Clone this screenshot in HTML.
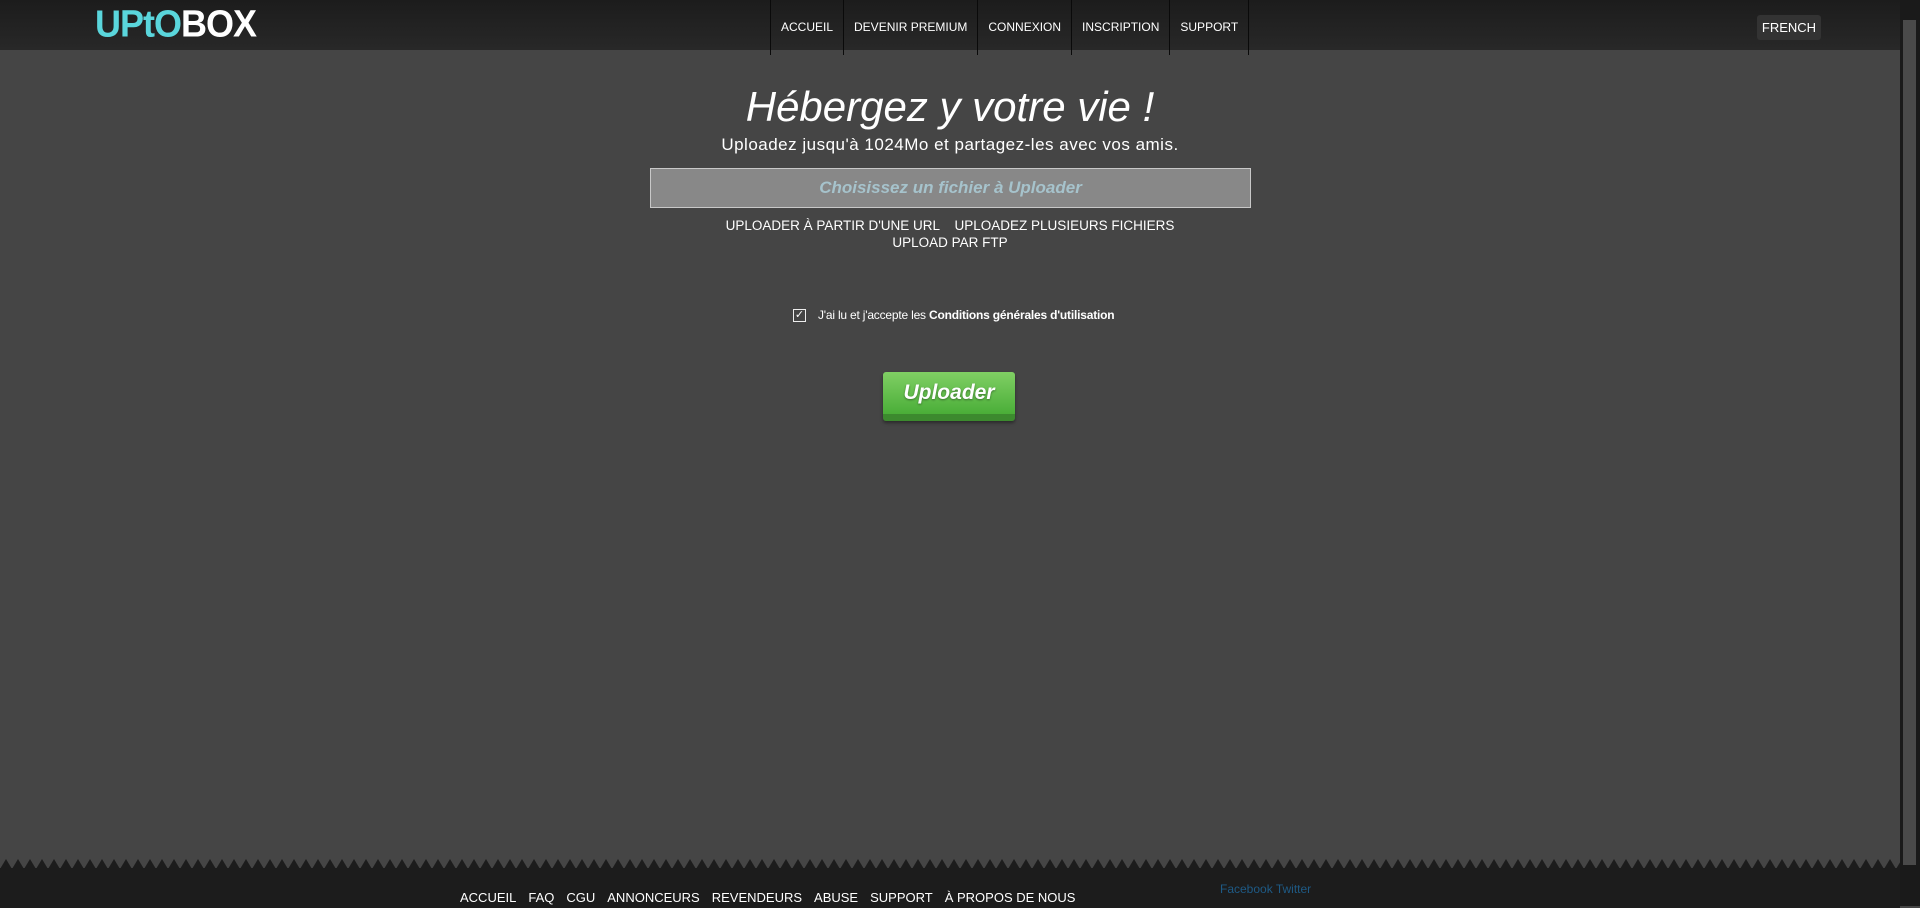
<!DOCTYPE html>
<html><head><meta charset="utf-8"><style>
*{margin:0;padding:0;box-sizing:border-box}
html,body{width:1920px;height:906px;overflow:hidden;background:#454545;font-family:"Liberation Sans",sans-serif;color:#fff}
.sb{position:absolute;right:0;top:0;width:20px;height:906px;background:#1a1a1a}
.sb i{position:absolute;left:3px;top:20px;width:13px;height:845px;background:#4a4a4a;}
header{position:absolute;left:0;top:0;width:1900px;height:50px;background:linear-gradient(#1c1c1c,#282828)}
.logo{position:absolute;left:95px;top:7px;font:bold 36px "Liberation Sans",sans-serif;letter-spacing:-1px;transform:scaleX(1.0) scaleY(1.05);transform-origin:left top;line-height:32px}
.logo span{color:#5ad6dc}
nav{position:absolute;left:770px;top:0;height:55px;display:flex;border-left:1px solid #0a0a0a}
nav a{display:block;height:55px;line-height:54px;padding:0 10px;font-size:12px;color:#fff;text-decoration:none;border-right:1px solid #0a0a0a}
.fr{position:absolute;left:1757px;top:15px;width:64px;height:25px;background:#333;border-radius:3px;font-size:13px;text-align:center;line-height:25px}
h1{position:absolute;left:0;width:1900px;top:83px;text-align:center;font:italic 42px "Liberation Sans",sans-serif}
.sub{position:absolute;left:0;width:1900px;top:135px;text-align:center;font-size:17px;letter-spacing:.5px}
.inp{position:absolute;left:650px;top:168px;width:601px;height:40px;background:#888;border:1px solid #c8c8c8;text-align:center;font:italic bold 17px "Liberation Sans",sans-serif;color:#a6c3cc;line-height:38px}
.links{position:absolute;left:0;width:1900px;top:217px;text-align:center;font-size:13.5px;line-height:17px}
.chk{position:absolute;left:793px;top:309px;width:13px;height:13px;border:1px solid #eee;font-size:11px;line-height:11px;text-align:center}
.ct{position:absolute;left:818px;top:308px;font-size:12px;letter-spacing:-.2px}
.btn{position:absolute;left:883px;top:372px;width:132px;height:49px;border-radius:3px;background:linear-gradient(#80cf64,#4aae38);border-bottom:7px solid #3c8a2e;box-shadow:0 2px 3px rgba(0,0,0,.4);text-align:center;font:italic bold 21px "Liberation Sans",sans-serif;line-height:42px;text-shadow:0 1px 2px rgba(0,0,0,.4)}
footer{position:absolute;left:0;top:868px;width:1900px;height:40px;background:#1c1c1c}
.fl{position:absolute;left:460px;top:890px;font-size:13px}
.fl a{color:#fff;text-decoration:none;margin-right:12px}
.fb{position:absolute;left:1220px;top:882px;font-size:12px;color:#1e5a85}
</style></head><body>
<header>
<div class="logo"><span>UPtO</span>BOX</div>
<nav><a>ACCUEIL</a><a>DEVENIR PREMIUM</a><a>CONNEXION</a><a>INSCRIPTION</a><a>SUPPORT</a></nav>
<div class="fr">FRENCH</div>
</header>
<h1>Hébergez y votre vie !</h1>
<div class="sub">Uploadez jusqu'à 1024Mo et partagez-les avec vos amis.</div>
<div class="inp">Choisissez un fichier à Uploader</div>
<div class="links">UPLOADER À PARTIR D'UNE URL &nbsp;&nbsp; UPLOADEZ PLUSIEURS FICHIERS<br>UPLOAD PAR FTP</div>
<div class="chk">✓</div>
<div class="ct">J'ai lu et j'accepte les <b>Conditions générales d'utilisation</b></div>
<div class="btn">Uploader</div>
<svg style="position:absolute;left:0;top:859px" width="1900" height="10"><defs><pattern id="p" width="12" height="10" patternUnits="userSpaceOnUse"><path d="M0 10 L6 0 L12 10 Z" fill="#1c1c1c"/></pattern></defs><rect width="1900" height="10" fill="url(#p)"/></svg>
<footer></footer>
<div class="fl"><a>ACCUEIL</a><a>FAQ</a><a>CGU</a><a>ANNONCEURS</a><a>REVENDEURS</a><a>ABUSE</a><a>SUPPORT</a><a>À PROPOS DE NOUS</a></div>
<div class="fb">Facebook Twitter</div>
<div class="sb"><i></i></div>
</body></html>
